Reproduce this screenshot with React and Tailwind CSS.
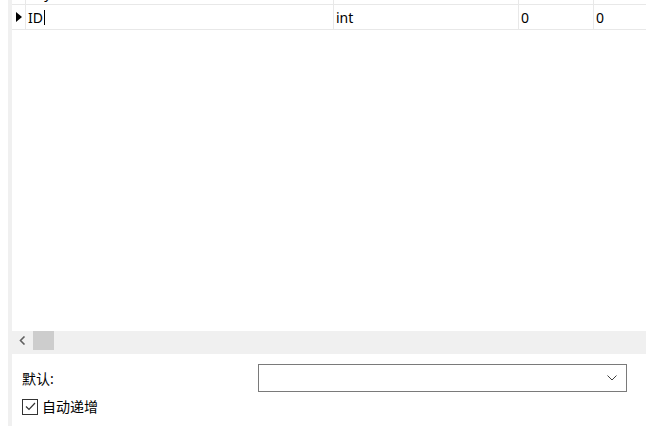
import { useState } from "react";

const font = { fontFamily: '"Noto Sans", "Noto Sans CJK SC", sans-serif' };

function Chevron() {
  return (
    <svg width="10" height="6" viewBox="0 0 10 6" fill="none">
      <path d="M0.5 0.5L5 5L9.5 0.5" stroke="#404040" strokeWidth="1" />
    </svg>
  );
}

function Check() {
  return (
    <svg width="11" height="9" viewBox="0 0 11 9" fill="none">
      <path d="M1 4.5L4 7.5L10 1" stroke="#333" strokeWidth="1.2" />
    </svg>
  );
}

export default function App() {
  const [autoInc, setAutoInc] = useState(true);

  return (
    <div className="flex h-[426px] w-[646px] overflow-hidden bg-white text-[14px] text-black" style={font}>
      <div className="w-[8px] shrink-0 bg-white" />
      <div className="w-[4px] shrink-0 bg-[#f0f0f0]" />
      <div className="flex min-w-0 flex-1 flex-col">
        {/* grid */}
        <div className="h-[331px] overflow-hidden">
          <div className="flex h-[5px] overflow-hidden border-b border-[#e8e8e8]">
            <div className="w-[14px] shrink-0 border-r border-[#e8e8e8]" />
            <div className="relative w-[308px] shrink-0 border-r border-[#e8e8e8]">
              <span className="absolute left-[2px] top-[-17px] leading-[20px]">Key</span>
            </div>
            <div className="w-[185px] shrink-0 border-r border-[#e8e8e8]" />
            <div className="w-[75px] shrink-0 border-r border-[#e8e8e8]" />
            <div className="flex-1" />
          </div>
          <div className="flex h-[25px] items-center border-b border-[#e8e8e8]">
            <div className="flex h-full w-[14px] shrink-0 items-center justify-center border-r border-[#e8e8e8]">
              <svg width="6" height="10" viewBox="0 0 6 10">
                <path d="M0 0L6 5L0 10Z" fill="#000" />
              </svg>
            </div>
            <div className="flex h-full w-[308px] shrink-0 items-center border-r border-[#e8e8e8] pl-[2px]">
              <span>ID</span>
              <span className="ml-[1px] h-[15px] w-[1px] bg-black" />
            </div>
            <div className="flex h-full w-[185px] shrink-0 items-center border-r border-[#e8e8e8] pl-[2px]">int</div>
            <div className="flex h-full w-[75px] shrink-0 items-center border-r border-[#e8e8e8] pl-[2px]">0</div>
            <div className="flex h-full flex-1 items-center pl-[2px]">0</div>
          </div>
        </div>

        {/* horizontal scrollbar */}
        <div className="flex h-[23px] items-start bg-[#f0f0f0]">
          <div className="flex h-[19px] w-[21px] items-center justify-center">
            <svg width="7" height="9" viewBox="0 0 7 9" fill="none">
              <path d="M5.5 0.5L1.5 4.5L5.5 8.5" stroke="#606060" strokeWidth="1.6" />
            </svg>
          </div>
          <div className="h-[19px] w-[21px] bg-[#cdcdcd]" />
        </div>

        {/* form */}
        <div className="flex flex-col pl-[10px]">
          <div className="mt-[10px] flex h-[28px] items-center">
            <span className="w-[236px] shrink-0">默认:</span>
            <button className="flex h-[28px] w-[369px] items-center justify-end border border-[#7a7a7a] bg-white pr-[9px]">
              <Chevron />
            </button>
          </div>
          <label className="mt-[4px] flex cursor-pointer items-center gap-[4px]" onClick={() => setAutoInc(!autoInc)}>
            <span className="flex h-[16px] w-[16px] items-center justify-center border border-[#333] bg-white">
              {autoInc && <Check />}
            </span>
            <span>自动递增</span>
          </label>
        </div>
      </div>
    </div>
  );
}
